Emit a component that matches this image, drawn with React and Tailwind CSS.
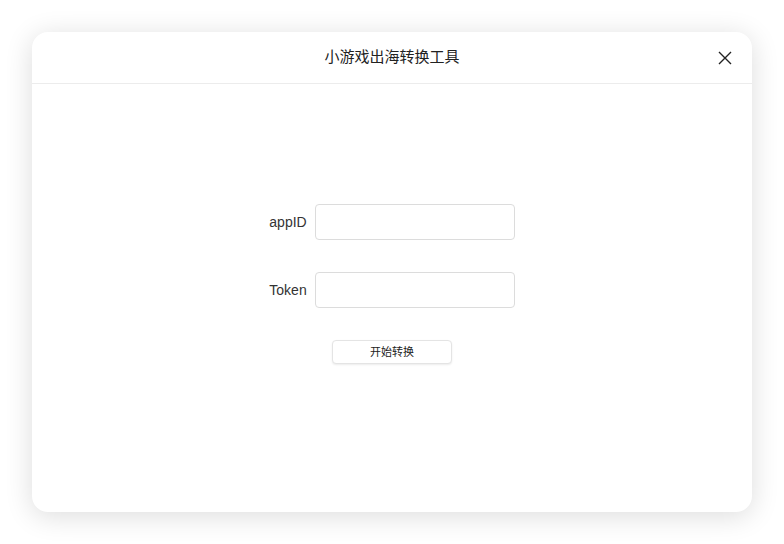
import React from "react";

const font = { fontFamily: '"Liberation Sans", "Noto Sans CJK SC", sans-serif' };

const Field = ({ label }) => (
  <div className="flex items-center justify-center gap-2">
    <span className="text-[14px] text-[#333]">{label}</span>
    <input
      type="text"
      className="w-[200px] h-[36px] rounded-[4px] border border-[#dcdcdc] bg-white px-2 text-[14px] outline-none"
    />
  </div>
);

const App = () => {
  return (
    <div className="w-[784px] h-[544px] bg-white p-8" style={font}>
      <div className="w-[720px] h-[480px] bg-white rounded-2xl shadow-[0_4px_28px_rgba(0,0,0,0.14)] flex flex-col">
        <div className="relative h-[52px] border-b border-[#ececec] flex items-center justify-center">
          <h1 className="text-[15px] text-[#222]">小游戏出海转换工具</h1>
          <button className="absolute right-[20px] top-[19px] w-[14px] h-[14px]">
            <svg viewBox="0 0 14 14" width="14" height="14">
              <path d="M1 1L13 13M13 1L1 13" stroke="#222" strokeWidth="1.4" fill="none" />
            </svg>
          </button>
        </div>
        <div className="flex flex-col items-center pt-[120px]">
          <Field label="appID" />
          <div className="h-8" />
          <Field label="Token" />
          <button className="mt-8 w-[120px] h-[24px] rounded-[4px] border border-[#e4e4e4] bg-white shadow-[0_1px_2px_rgba(0,0,0,0.08)] text-[11px] text-[#222]">
            开始转换
          </button>
        </div>
      </div>
    </div>
  );
};

export default App;
